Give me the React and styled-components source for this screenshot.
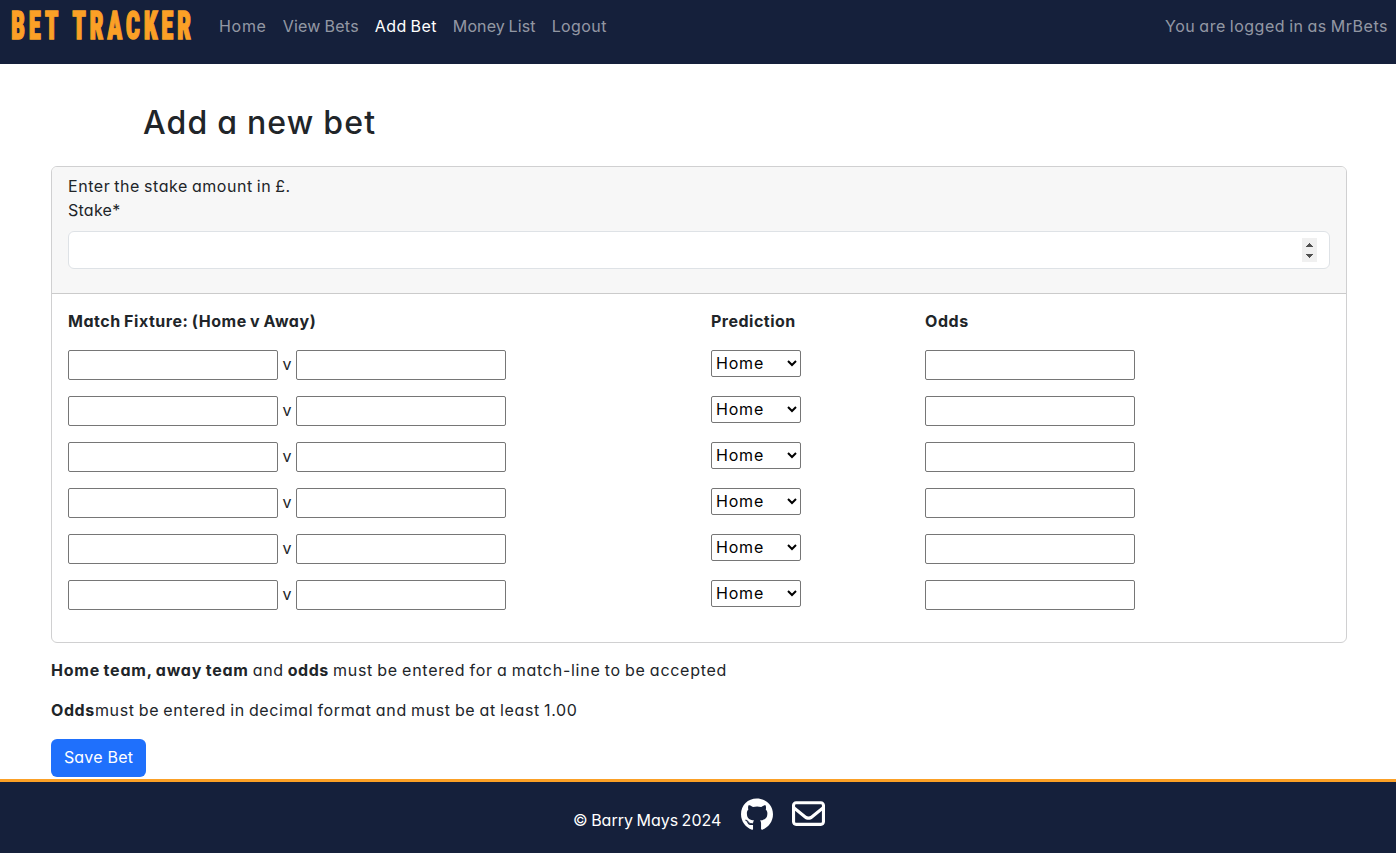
import React from "react";
import styled, { createGlobalStyle } from "styled-components";
import { FaGithub, FaRegEnvelope } from "react-icons/fa6";

const NAVY = "#15203b";
const ORANGE = "#fba026";

const GlobalStyle = createGlobalStyle`
  *, *::before, *::after { box-sizing: border-box; }
  body {
    margin: 0;
    background: #fff;
    color: #212529;
    font-family: Inter, "Open Sans", sans-serif;
    font-feature-settings: "cv11" 1;
    font-size: 16px;
    line-height: 24px;
    word-spacing: -1px;
  }
`;

const Page = styled.div`
  display: flex;
  flex-direction: column;
  height: 853px;
  overflow: hidden;
`;

const Navbar = styled.nav`
  display: flex;
  align-items: flex-start;
  height: 64px;
  padding: 0 8px 0 11px;
  background: ${NAVY};
  white-space: nowrap;
`;

const Brand = styled.a`
  width: 200px;
  height: 52px;
  color: ${ORANGE};
`;

const BrandText = styled.span`
  display: inline-block;
  font-family: Roboto, sans-serif;
  font-size: 38.5px;
  font-weight: 900;
  font-stretch: 75%;
  line-height: 51px;
  letter-spacing: 5.7px;
  word-spacing: 3px;
  -webkit-text-stroke: 1.3px ${ORANGE};
  transform: scaleX(0.645);
  transform-origin: left center;
`;

const NavList = styled.div`
  display: flex;
  flex: 1;
  padding-top: 14px;
`;

const Text = styled.span`
  letter-spacing: ${(p) => p.$track || 0}px;
`;

const NavLink = styled(Text)`
  padding: 0 8px;
  color: ${(p) => (p.$active ? "#fff" : "rgba(255, 255, 255, 0.55)")};
`;

const LoggedIn = styled(Text)`
  padding-top: 14px;
  color: rgba(255, 255, 255, 0.55);
`;

const Main = styled.main`
  flex: 1;
  padding: 40px 49px 0 51px;
`;

const Title = styled.h2`
  margin: 0 0 24px 92px;
  font-size: 32px;
  font-weight: 500;
  line-height: 38px;
  letter-spacing: 1.18px;
`;

const Card = styled.section`
  border: 1px solid #d0d0d1;
  border-radius: 6px;
  overflow: hidden;
`;

const CardHeader = styled.div`
  display: flex;
  flex-direction: column;
  height: 127px;
  padding: 7px 16px 0;
  background: #f7f7f7;
  border-bottom: 1px solid #cbcbcb;
`;

const StakeField = styled.div`
  display: flex;
  align-items: center;
  justify-content: flex-end;
  height: 38px;
  margin-top: 9px;
  padding-right: 12px;
  border: 1px solid #dee2e6;
  border-radius: 6px;
  background: #fff;
`;

const Spinner = styled.svg`
  width: 15px;
  height: 24px;
  background: #f0f0f0;
`;

const CardBody = styled.div`
  display: flex;
  flex-direction: column;
  gap: 16px;
  height: 348px;
  padding: 16px 0 0 16px;
`;

const Row = styled.div`
  display: grid;
  grid-template-columns: 643px 214px 1fr;
  align-items: start;
  font-weight: ${(p) => (p.$head ? 700 : 400)};
`;

const HeadRow = styled(Row)`
  line-height: 23px;
  height: 24px;
`;

const Fixture = styled.div`
  display: flex;
  align-items: flex-start;
`;

const Versus = styled.span`
  width: 18px;
  padding-top: 2px;
  text-align: center;
`;

const Field = styled.input`
  width: 210px;
  height: 30px;
  padding: 1px 4px;
  border: 1px solid #767676;
  border-radius: 2px;
  background: #fff;
  font: inherit;
`;

const Select = styled.select`
  width: 90px;
  height: 27px;
  padding: 0 0 2px;
  border: 1px solid #767676;
  border-radius: 2px;
  background: #fff;
  color: #000;
  font: inherit;
  font-feature-settings: inherit;
  letter-spacing: 0.8px;
`;

const Note = styled.p`
  margin: ${(p) => p.$top}px 0 0;
  white-space: nowrap;
`;

const Strong = styled(Text)`
  font-weight: 700;
`;

const SaveButton = styled.button`
  display: block;
  width: 95px;
  height: 38px;
  margin-top: 17px;
  padding: 0 0 2px;
  border: 0;
  border-radius: 6px;
  background: #1f70fc;
  color: #fff;
  font: inherit;
  font-feature-settings: inherit;
  letter-spacing: 0.2px;
`;

const Footer = styled.footer`
  display: flex;
  justify-content: center;
  height: 74px;
  padding: 16px 0 0 2px;
  border-top: 3px solid ${ORANGE};
  background: ${NAVY};
  color: #fff;
`;

const Copyright = styled(Text)`
  width: 148px;
  margin: 10px 20px 0 0;
  white-space: nowrap;
`;

const GithubIcon = styled(FaGithub)`
  width: 32px;
  height: 33px;
  margin-right: 19px;
`;

const MailIcon = styled(FaRegEnvelope)`
  width: 33px;
  height: 33px;
  margin-top: -1px;
`;

const LINKS = [
  ["Home", 0.7],
  ["View Bets", 0.26],
  ["Add Bet", 0.4, true],
  ["Money List", 0.12],
  ["Logout", 0.4],
];

export default function App() {
  return (
    <Page>
      <GlobalStyle />
      <Navbar>
        <Brand>
          <BrandText>BET TRACKER</BrandText>
        </Brand>
        <NavList>
          {LINKS.map(([label, track, active]) => (
            <NavLink key={label} $track={track} $active={active}>
              {label}
            </NavLink>
          ))}
        </NavList>
        <LoggedIn $track={0.52}>You are logged in as MrBets</LoggedIn>
      </Navbar>
      <Main>
        <Title>Add a new bet</Title>
        <Card>
          <CardHeader>
            <Text $track={0.55}>Enter the stake amount in £.</Text>
            <Text $track={0.25}>Stake*</Text>
            <StakeField>
              <Spinner viewBox="0 0 15 24" shapeRendering="crispEdges">
                <path d="M4 9h7v-1h-1v-1h-1v-1h-1v-1h-1v1h-1v1h-1v1h-1z" fill="#505050" />
                <path d="M4 16h7v1h-1v1h-1v1h-1v1h-1v-1h-1v-1h-1v-1h-1z" fill="#505050" />
              </Spinner>
            </StakeField>
          </CardHeader>
          <CardBody>
            <HeadRow $head>
              <Text $track={0.54}>Match Fixture: (Home v Away)</Text>
              <Text $track={0.5}>Prediction</Text>
              <Text $track={0.6}>Odds</Text>
            </HeadRow>
            {[0, 1, 2, 3, 4, 5].map((i) => (
              <Row key={i}>
                <Fixture>
                  <Field />
                  <Versus>v</Versus>
                  <Field />
                </Fixture>
                <Select defaultValue="Home">
                  <option>Home</option>
                  <option>Away</option>
                  <option>Draw</option>
                </Select>
                <Field />
              </Row>
            ))}
          </CardBody>
        </Card>
        <Note $top={15}>
          <Strong $track={0.78}>Home team, away team</Strong>
          <Text $track={0.6}> and </Text>
          <Strong $track={0.5}>odds</Strong>
          <Text $track={0.73}> must be entered for a match-line to be accepted</Text>
        </Note>
        <Note $top={16}>
          <Strong $track={0.6}>Odds</Strong>
          <Text $track={0.65}>must be entered in decimal format and must be at least 1.00</Text>
        </Note>
        <SaveButton>Save Bet</SaveButton>
      </Main>
      <Footer>
        <Copyright $track={0}>© Barry Mays 2024</Copyright>
        <GithubIcon />
        <MailIcon />
      </Footer>
    </Page>
  );
}
